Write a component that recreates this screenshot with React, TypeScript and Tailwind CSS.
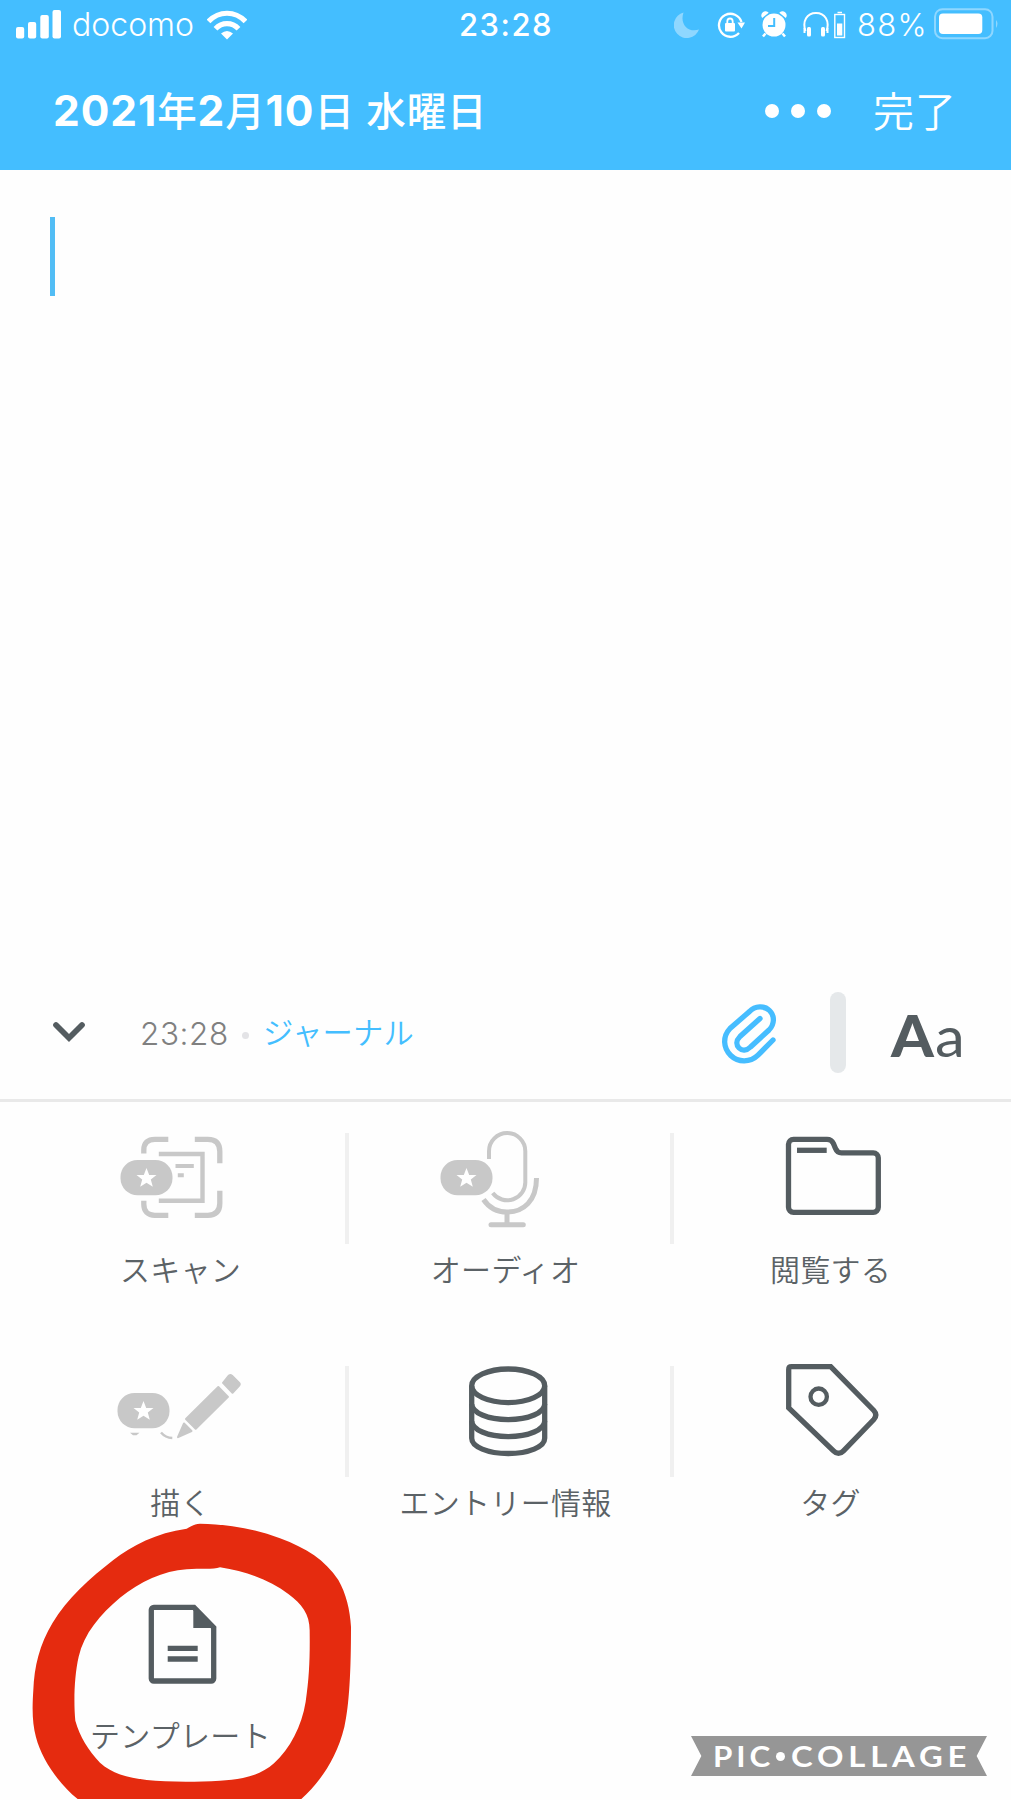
import type { ReactNode } from 'react';

const STAR = 'M0 -10.2 L2.7 -3.3 L10 -3.1 L4.3 1.4 L6.3 8.6 L0 4.5 L-6.3 8.6 L-4.3 1.4 L-10 -3.1 L-2.7 -3.3 Z';

function PremiumBadge({ x }: { x: number }) {
  return (
    <g>
      <rect x={x} y="40" width="52" height="35.3" rx="17" fill="#c8c8c8" />
      <path d={STAR} transform={`translate(${x + 26} 58.2)`} fill="#fff" />
    </g>
  );
}

function ToolIcon({ children, className = 'stroke-[#545c60]' }: { children: ReactNode; className?: string }) {
  return (
    <svg width="140" height="120" viewBox="0 0 140 120" fill="none" strokeWidth="5.3" className={className}>
      {children}
    </svg>
  );
}

function ScanIcon() {
  return (
    <ToolIcon className="stroke-[#c8c8c8]">
      <path d="M32.8 33.5V30c0-7 4-10.7 11-10.7h13.5M83.8 19.3h13c8 0 12 4 12 12v12M108.8 70.7v12.6c0 8-4 12-12 12h-13M57.3 95.3H43.8c-7 0-11-4-11-11v-3.6" />
      <path d="M47.8 34H91.5v46.7H47.8" strokeWidth="4.4" />
      <path d="M64.5 46h18.3M66.8 55.3h6" strokeWidth="4" />
      <g stroke="none">
        <PremiumBadge x={9.5} />
      </g>
    </ToolIcon>
  );
}

function AudioIcon() {
  return (
    <ToolIcon className="stroke-[#c8c8c8]">
      <path d="M53 39v-7.8a18.1 18.1 0 0 1 36.3 0v30.3A18.1 18.1 0 0 1 56.7 73" strokeWidth="4" />
      <path d="M100.5 58c0 23-13 34-29.5 34-10 0-18.5-5-23.5-12.5" strokeWidth="5" />
      <path d="M71 92v12" strokeWidth="5" />
      <path d="M55 104.8h32.3" strokeLinecap="round" strokeWidth="5" />
      <g stroke="none">
        <PremiumBadge x={4.5} />
      </g>
    </ToolIcon>
  );
}

function BrowseIcon() {
  return (
    <ToolIcon>
      <path d="M32.5 19.3H66c3.5 0 5 1 6.3 4l2.2 5.2c1.3 3.2 3 4.3 6 4.3h31.8a5 5 0 0 1 5 5v49.5a5 5 0 0 1-5 5H32.5a5 5 0 0 1-5-5v-63a5 5 0 0 1 5-5Z" />
      <path d="M36 30.3h29.7" />
    </ToolIcon>
  );
}

function DrawIcon() {
  return (
    <ToolIcon className="stroke-[#c8c8c8]">
      <g fill="#c8c8c8" strokeWidth="2" strokeLinejoin="round">
        <path d="M118 22.5q1.5-1 3 .3l7 7q1.5 1.5 0 3l-6.5 7-9.5-10Z" />
        <path d="M107.3 34 117 43.9 84.7 75.7 75 66Z" />
        <path d="M73 70.5 80.5 78 67 84.2Z" />
      </g>
      <path d="M50 79.5c3 3.5 6.5 5.3 11.3 5.5" strokeWidth="2.5" />
      <path d="M19 79.8h9.5l-3 2.5h-3.5Z" fill="#c8c8c8" stroke="none" />
      <g stroke="none">
        <PremiumBadge x={6.5} />
      </g>
    </ToolIcon>
  );
}

function EntryInfoIcon() {
  return (
    <ToolIcon>
      <ellipse cx="72.2" cy="32.8" rx="36.5" ry="16.8" />
      <path d="M35.7 32.8v52.5c0 8.5 16 15.2 36.5 15.2s36.5-6.7 36.5-15.2V32.8" />
      <path d="M35.7 51c0 8.5 16 15.6 36.5 15.6s36.5-7.1 36.5-15.6M35.7 68c0 8.5 16 15.6 36.5 15.6s36.5-7.1 36.5-15.6" />
    </ToolIcon>
  );
}

function TagIcon() {
  return (
    <ToolIcon>
      <path d="M30.5 13.7h39.2L112.8 57.5q4 4.5 0 9L82.5 97.8q-5 5-10 0L27.7 54.8V16.5q0-2.8 2.8-2.8Z" />
      <circle cx="57.7" cy="43.7" r="8.2" strokeWidth="4.3" />
    </ToolIcon>
  );
}

function TemplateIcon() {
  return (
    <ToolIcon>
      <path d="M83 21.3H42.8a2.5 2.5 0 0 0-2.5 2.5v68.7a2.5 2.5 0 0 0 2.5 2.5h57.4a2.5 2.5 0 0 0 2.5-2.5V41.5Z" />
      <path d="M82.3 19v23H105.3Z" fill="#545c60" stroke="none" />
      <path d="M56.7 62.3h30M56.7 73h30" />
    </ToolIcon>
  );
}

const tools = [
  { label: 'スキャン', icon: <ScanIcon /> },
  { label: 'オーディオ', icon: <AudioIcon /> },
  { label: '閲覧する', icon: <BrowseIcon /> },
  { label: '描く', icon: <DrawIcon /> },
  { label: 'エントリー情報', icon: <EntryInfoIcon /> },
  { label: 'タグ', icon: <TagIcon /> },
  { label: 'テンプレート', icon: <TemplateIcon /> },
];

function StatusBar() {
  return (
    <div className="flex h-[50px] items-center">
      {/* Signal */}
      <svg className="ml-4" width="45" height="30" viewBox="0 0 45 30" fill="#fff">
        <rect x="0" y="17" width="8.2" height="11.5" rx="2" />
        <rect x="12" y="12" width="8.2" height="16.5" rx="2" />
        <rect x="24.3" y="5" width="8.5" height="23.5" rx="2" />
        <rect x="36.5" y="0" width="8.5" height="28.5" rx="2" />
      </svg>
      <span className="ml-[11px] w-[135px] text-[32px] leading-[50px] font-[350]">docomo</span>
      {/* Wifi */}
      <svg width="40" height="30" viewBox="0 0 40 30" fill="none" stroke="#fff" strokeWidth="5.2">
        <path d="M1.5 11.5C12 0.5 28 0.5 38.5 11.5" />
        <path d="M8.5 18.8c6.5-6.8 16.5-6.8 23 0" />
        <path d="M20 29.5l-6-6q6-5 12 0Z" fill="#fff" stroke="none" />
      </svg>
      <span className="ml-[212px] w-[96px] text-[31px] leading-[50px] font-[550] tracking-[1.5px]">23:28</span>
      {/* Do not disturb */}
      <svg className="ml-[119px]" width="26" height="28" viewBox="0 0 26 28" fill="#8fd7ff">
        <path d="M9.5 1.5A13 13 0 1 0 25 18.5C14 22 5.5 13 9.5 1.5Z" />
      </svg>
      {/* Rotation lock */}
      <svg className="ml-[17px]" width="28" height="28" viewBox="0 0 28 28" fill="none" stroke="#fff" strokeWidth="2.3">
        <path d="M24.5 11A11.5 11.5 0 1 0 22 22" />
        <path d="M20.5 11.5h7.5l-3.5 6Z" fill="#fff" stroke="none" />
        <rect x="8" y="12" width="10" height="8.5" rx="1" fill="#fff" stroke="none" />
        <path d="M10.3 12.5V10.5a2.7 3 0 0 1 5.4 0v2" strokeWidth="1.8" />
      </svg>
      {/* Alarm */}
      <svg className="ml-4" width="26" height="28" viewBox="0 0 26 28" fill="#fff">
        <circle cx="13" cy="14" r="11.5" />
        <path d="M1.2 7a4 4 0 0 1 6.5-5.2ZM24.8 7a4 4 0 0 0-6.5-5.2Z" />
        <path d="m4.5 22.5-2.5 3M21.5 22.5l2.5 3" stroke="#fff" strokeWidth="2.5" />
        <path d="M13.2 7v8H7" fill="none" stroke="#44beff" strokeWidth="2" />
      </svg>
      {/* Headphones with their own battery */}
      <svg className="ml-4" width="43" height="28" viewBox="0 0 43 28" fill="none" stroke="#fff" strokeWidth="2">
        <path d="M2.5 20C-1 10 4 2 13 2s14 8 10.5 18" />
        <path d="M1.5 17v5M24.5 17v5" />
        <rect x="4" y="16" width="4" height="9.5" rx="1.5" fill="#fff" stroke="none" />
        <rect x="18" y="16" width="4" height="9.5" rx="1.5" fill="#fff" stroke="none" />
        <rect x="31.8" y="3.5" width="9.7" height="23" strokeWidth="1.4" />
        <path d="M34.5 1.5h4.5" strokeWidth="1.5" />
        <rect x="34" y="12.5" width="5.3" height="12" fill="#fff" stroke="none" />
      </svg>
      <span className="ml-[11px] w-[77px] text-[31px] leading-[50px] font-[350] tracking-[1.3px] whitespace-nowrap">88%</span>
      {/* Battery */}
      <svg className="-mt-[2px] shrink-0" width="66" height="32" viewBox="0 0 66 32" fill="none">
        <rect x="1" y="1.2" width="57.5" height="29" rx="7.5" stroke="#8fd7ff" strokeWidth="2" />
        <rect x="5" y="5.5" width="43.3" height="20.5" rx="4" fill="#fff" />
        <path d="M62 12q3 3.5 0 8Z" fill="#8fd7ff" />
      </svg>
    </div>
  );
}

export default function App() {
  return (
    <div className="relative flex h-[1800px] w-[1011px] flex-col overflow-hidden bg-[#fefefe] font-['Inter','Noto_Sans_CJK_JP',sans-serif]">
      <header className="h-[170px] shrink-0 bg-[#44beff] text-white">
        <StatusBar />
        <div className="flex h-[122px] items-center">
          <h1 className="mt-[1px] ml-[53px] w-[712px] text-[39.5px] leading-[60px] font-medium tracking-[0.9px] whitespace-nowrap">
            <b className="text-[42.5px] font-bold">2021</b>年<b className="text-[42.5px] font-bold">2</b>月<b className="text-[42.5px] font-bold">10</b>日 水曜日
          </h1>
          <div className="flex gap-[12px]">
            <span className="size-[14px] rounded-full bg-white" />
            <span className="size-[14px] rounded-full bg-white" />
            <span className="size-[14px] rounded-full bg-white" />
          </div>
          <span className="mt-[2px] ml-[42px] text-[41px] leading-[60px] font-[350] tracking-[1px]">完了</span>
        </div>
      </header>

      {/* Editor */}
      <main className="h-[809px] shrink-0 pt-[47px] pl-[50px]">
        <div className="h-[79px] w-[5px] bg-[#52bdf5]" />
      </main>

      {/* Toolbar */}
      <div className="flex h-[123px] shrink-0 items-center border-b-[3px] border-[#e9e9e9] pb-[14px]">
        <svg className="ml-[52px]" width="34" height="24" viewBox="0 0 34 24" fill="none" stroke="#545c60" strokeWidth="5.7" strokeLinecap="round">
          <path d="m4 5 13 13L30 5" />
        </svg>
        <span className="mt-[4px] ml-[54px] w-[102px] text-[31.5px] leading-[50px] font-[350] tracking-[0.6px] text-[#808080]">23:28</span>
        <span className="mt-[6px] size-[7px] rounded-full bg-[#e3e3e6]" />
        <span className="mt-[2px] ml-[14px] w-[458px] text-[30.3px] leading-[50px] font-[350] tracking-[0.2px] text-[#44beff]">ジャーナル</span>
        <svg width="56" height="60" viewBox="0 0 56 60" className="mt-[3px]" fill="none" stroke="#46bdff" strokeWidth="5.3" strokeLinecap="round">
          <path d="M52 36 37 51.2C29 59 17 58.5 9.8 51.5 2 44 1.5 32.5 9 24.5L28.5 7.5C34 1.5 43.5 1.5 48.5 6.5c5.5 5.5 5 14-.5 19.5L29.5 43c-4 4-8.5 4-11.5 1s-3-7.5 1-11.5L39 14.5" />
        </svg>
        <span className="ml-[53px] h-[81px] w-[16px] rounded-full bg-[#e5e8ea]" />
        <span className="mt-[5px] ml-[45px] flex text-[57px] leading-[70px] text-[#545c60]">
          <b className="w-[44px] origin-left scale-x-[1.07] font-['Lato',sans-serif] font-black">A</b>
          <span className="origin-left scale-x-[1.05] font-['Lato',sans-serif]">a</span>
        </span>
      </div>

      {/* Attachment tools */}
      <div className="grid shrink-0 grid-cols-[325px_325px_325px] auto-rows-[233px] pt-[18px] pl-[22px]">
        {tools.map((tool, i) => (
          <div key={tool.label} className="flex">
            <div className="flex w-[317px] shrink-0 flex-col items-center">
              {tool.icon}
              <span className="mt-[5px] text-[30px] leading-[50px] font-[350] tracking-[0.3px] whitespace-nowrap text-[#5b6266]">{tool.label}</span>
            </div>
            {i < 6 && i % 3 < 2 && <div className="mt-[13px] ml-[6px] h-[111px] w-[4px] shrink-0 bg-[#f0f0f0]" />}
          </div>
        ))}
      </div>

      {/* Hand-drawn ring over the template tool */}
      <svg className="absolute bottom-0 left-0" width="380" height="290" viewBox="0 0 1140 870" fill="#e52b0f">
        <path
          fillRule="evenodd"
          d="M600 41C580 42 570 52 560 56C470 68 395 107 340 150C270 204 200 268 158 338C118 404 103 470 100 540C96 600 97 640 108 682C124 745 175 821 233 867H904C960 816 1010 746 1033 651C1048 585 1053 480 1053 350C1050 300 1038 250 1015 210C975 150 920 115 840 85C760 54 680 43 600 41ZM660 172C740 184 810 211 865 252C905 282 929 311 929 361C930 441 928 501 917 575C905 650 870 715 822 760C780 798 725 808 660 812C580 817 500 816 440 810C380 802 335 790 300 758C265 721 240 681 226 632C221 581 222 501 236 440C252 371 300 313 360 263C420 216 490 182 560 178C600 175 640 179 660 172Z"
        />
      </svg>

      {/* Watermark */}
      <div className="absolute right-[24px] bottom-[24px] flex h-[40px] w-[296px] items-center bg-[#969696] font-['Lato',sans-serif] text-[28.5px] leading-[40px] font-bold text-white [clip-path:polygon(0_0,100%_0,96.5%_50%,100%_100%,0_100%,3.5%_50%)]">
        <span className="ml-[22px] w-[63px] origin-left scale-x-[1.1] tracking-[3.5px]">PIC</span>
        <span className="size-[9px] rounded-full bg-white" />
        <span className="ml-[6px] origin-left scale-x-[1.15] tracking-[4.2px]">COLLAGE</span>
      </div>
    </div>
  );
}
